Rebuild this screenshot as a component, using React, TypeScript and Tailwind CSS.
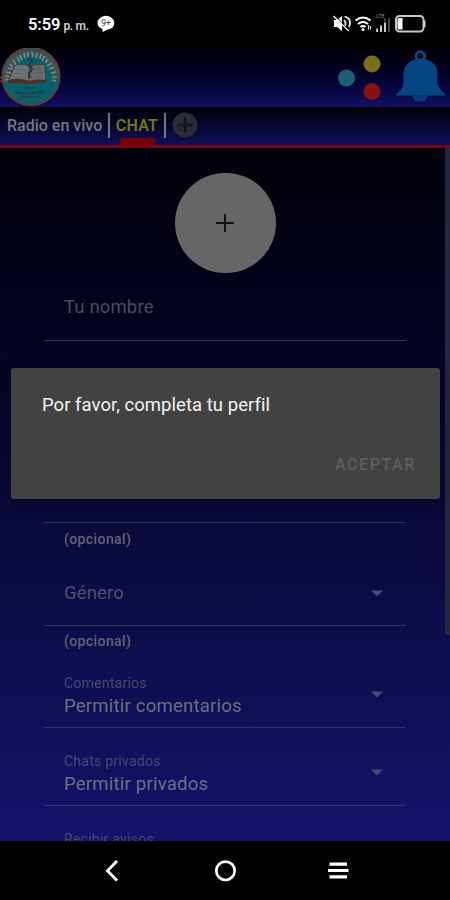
import React from "react";

function StatusBar() {
  return (
    <div className="flex h-12 shrink-0 items-center bg-black pl-[28px] pr-[24px] text-white">
      <div className="flex items-baseline gap-[3px] pt-[2px]">
        <span className="text-[16.500px] font-semibold leading-[20px] tracking-[-0.100px]">5:59</span>
        <span className="w-[25px] whitespace-nowrap text-[12px] font-semibold leading-[20px] tracking-[-0.3px] text-[#d0d0d0]">p. m.</span>
      </div>
      <svg className="ml-[9px] h-[18px] w-[18px]" viewBox="0 0 18 18">
        <path d="M9 .800 C14 1.300 17.300 4.300 17.300 8 C17.300 11.500 14.500 14 11 14.500 L5.500 17 L5.500 14 C2.500 13 .5 11 .5 8 C.5 4.300 4 1.300 9 .800Z" fill="#fff" />
        <text x="9" y="11" textAnchor="middle" fontSize="8.500" fontFamily="Roboto, sans-serif" fill="#444">9+</text>
      </svg>
      <svg className="ml-auto h-[20px] w-[94px]" viewBox="332 14 94 20" fill="none">
        <path d="M334 20h3l5-4v15l-5-4h-3z" fill="#fff" />
        <path d="M344 20q3 3.500 0 7M344.500 16.500q8 2 4.500 10.500M333.500 16l15.500 15" stroke="#eee" strokeWidth="1.700" />
        <path d="M335 15.500l14.500 15" stroke="#000" strokeWidth=".8" />
        <path d="M355.500 20.500q7.500-6 15 0M358 24q5-4 10 0M360.500 27q2.500-2 5 0" stroke="#fff" strokeWidth="2" />
        <circle cx="363" cy="29.500" r="1.500" fill="#fff" />
        <path d="M368.500 25v4.500M370.500 26v3.500" stroke="#ddd" strokeWidth="1.200" />
        <text x="376" y="17.800" fontSize="5.500" fontFamily="Roboto, sans-serif" fill="#888">LTE</text>
        <path d="M377.200 28.500v3.500M381 25.500v6.500M385 22.500v9.500" stroke="#eee" strokeWidth="1.700" />
        <path d="M385 18.500v3M389 18.500v13.500" stroke="#555" strokeWidth="1.700" />
        <rect x="396" y="16" width="27.500" height="15.500" rx="3.500" stroke="#c9c9c9" strokeWidth="2" />
        <path d="M399 18h3.500v11.500h-3.500q-1.500 0-1.500-1.500v-8.500q0-1.500 1.500-1.500z" fill="#fff" />
        <path d="M424.500 20.500v6.500" stroke="#ccc" strokeWidth="2" />
      </svg>
    </div>
  );
}

function Logo() {
  return (
    <svg className="h-[60px] w-[61px]" viewBox="0 0 61 60">
      <circle cx="31" cy="28.500" r="28.800" fill="#07606a" stroke="#803620" strokeWidth="1.500" />
      <path d="M0 34l2.500-2M0 30l2.500-1" stroke="#803620" strokeWidth="1.500" />
      <path d="M6.500 34A25 25 0 1 1 56 31" fill="none" stroke="#3c5356" strokeWidth="5.500" />
      <path d="M5 32l5-1M5 28l5 1M6 24l5 1M8 20l5 1M10 16l4 4M13 12l3 5M17 9l3 5M20 7l2 5M24 5l1 5M28 4l0 5M32 4l1 5M37 5l-1 5M41 6l-1 5M45 8l-3 5M48 11l-3 4M52 15l-5 3M54 19l-5 2M56 24l-5 1M57 29l-5 0M56 33l-4-1" stroke="#858381" strokeWidth="1.700" />
      <path d="M8 33l6-15q9-3 16 0 8-3 15-1l1.500 17-16.500 2-22-1z" fill="#4b3028" />
      <path d="M9.500 31.500l6-14q8-2 13.500 1l-1 14q-8-3-18.500-1z" fill="#717475" />
      <path d="M30 18.500q7-2.500 14.500-1.500l.8 15q-9-1.500-16.800 1z" fill="#686a6a" />
      <path d="M15 21l11 1M14 25l12 1M12 29l14 1M32 21l10-1M32 25l11-.5M32 29l11-.5" stroke="#576062" strokeWidth=".7" />
      <path d="M28 10l4 3-3 4 3 4-3 5 1 4" fill="none" stroke="#273a3d" strokeWidth="2" />
      <path d="M25 40h9M15 44q16 3 29-1M20 48q10 2 20-.5" fill="none" stroke="#263e43" strokeWidth="2" strokeDasharray="2 .8 3 1" />
    </svg>
  );
}

function Header() {
  return (
    <div className="flex h-[59px] shrink-0 items-start bg-linear-to-b from-[#000005] to-[#100f61] pb-px">
      <Logo />
      <svg className="ml-auto h-[57px] w-[114px]" viewBox="336 48 114 57">
        <circle cx="372" cy="64" r="8.500" fill="#77701b" />
        <circle cx="346.500" cy="78" r="8.500" fill="#1d6076" />
        <circle cx="372" cy="91.500" r="8.500" fill="#871216" />
        <circle cx="420.300" cy="56" r="4.300" fill="none" stroke="#044985" strokeWidth="2.800" />
        <path d="M403.500 83V73C404 64 412 58.500 420.500 58.500S437.500 64 437.500 73v10q1 6 7.500 11v1.500h-49V94q7-4 7.500-11z" fill="#034681" />
        <path d="M412 95.500h16q-1 6-8 6t-8-6z" fill="#063b7a" />
      </svg>
    </div>
  );
}

function Tabs() {
  return (
    <div className="flex h-[41px] shrink-0 items-start border-b-[3px] border-[#730914] bg-linear-to-b from-[#020207] to-[#100f5c] pl-[7px] text-[16px] leading-[37px] text-[#77777d]">
      <span className="w-[101px] whitespace-nowrap font-medium tracking-[0px]">Radio en vivo</span>
      <span className="mt-[6px] h-[25px] w-[2px] bg-[#77777d]" />
      <div className="ml-[6px] flex h-[38px] w-[42px] flex-col items-center justify-between">
        <span className="h-[31px] font-semibold tracking-[0.200px] text-[#77771c]">CHAT</span>
        <span className="h-[7px] w-[35px] bg-[#760007]" />
      </div>
      <span className="ml-[6px] mt-[6px] h-[25px] w-[2px] bg-[#77777d]" />
      <svg className="ml-[6px] mt-[5px] h-[26px] w-[26px]" viewBox="0 0 26 26">
        <circle cx="13" cy="13" r="12.500" fill="#2b2b33" />
        <path d="M13 5.500v15M5.500 13h15" stroke="#121225" strokeWidth="2.500" />
      </svg>
    </div>
  );
}

function Caret() {
  return (
    <svg className="h-[7px] w-[12px]" viewBox="0 0 12 7">
      <path d="M0 .5h12L6 6.500z" fill="#4a4a72" />
    </svg>
  );
}

function Select({ label, value }: { label: string; value: string }) {
  return (
    <div className="flex h-[78px] shrink-0 items-start border-b border-[#323268] pl-[20px] pr-[23px] pt-[25px]">
      <div className="flex flex-col">
        <span className="text-[14px] leading-[16px] tracking-[0.250px] text-[#474772]">{label}</span>
        <span className="mt-[3px] text-[18.500px] leading-[24px] tracking-[0.230px] text-[#6e6e84]">{value}</span>
      </div>
      <div className="ml-auto mt-[16px] flex"><Caret /></div>
    </div>
  );
}

function ProfileForm() {
  return (
    <div className="flex h-[693px] shrink-0 justify-between overflow-hidden bg-linear-to-b from-[#01010a] via-[#0a0a3b] via-54% to-[#14126a]">
      <div className="ml-[44px] flex w-[362px] flex-col">
        <div className="mt-[25px] flex h-[100px] w-[101px] shrink-0 items-center justify-center self-center rounded-full bg-[#666]">
          <svg className="h-[18px] w-[18px]" viewBox="0 0 18 18">
            <path d="M9 0v18M0 9h18" stroke="#111" strokeWidth="2" />
          </svg>
        </div>
        <div className="mt-[10px] flex h-[58px] shrink-0 items-center border-b border-[#35354e] pb-[7px] pl-[20px] text-[18.500px] tracking-[0.150px] text-[#4b4b5e]">Tu nombre</div>
        <div className="h-[182px] shrink-0 border-b border-[#2c2c54]" />
        <span className="mt-px h-[32px] shrink-0 pl-[20px] text-[14px] font-medium leading-[31px] tracking-[0.400px] text-[#626274]">(opcional)</span>
        <div className="flex h-[70px] shrink-0 items-center border-b border-[#302f60] pl-[20px] pr-[23px] pt-[5px] text-[18.500px] tracking-[0.150px] text-[#50506c]">
          <span className="pt-[1px]">Género</span>
          <div className="ml-auto flex"><Caret /></div>
        </div>
        <span className="h-[24px] shrink-0 pl-[20px] text-[14px] font-medium leading-[31px] tracking-[0.400px] text-[#626276]">(opcional)</span>
        <Select label="Comentarios" value="Permitir comentarios" />
        <Select label="Chats privados" value="Permitir privados" />
        <span className="shrink-0 pl-[20px] pt-[25px] text-[14px] leading-[16px] tracking-[0.250px] text-[#474772]">Recibir avisos</span>
      </div>
      <div className="h-[487px] w-[5px] bg-[#26263e]" />
    </div>
  );
}

function Navigation() {
  return (
    <div className="grid h-[59px] shrink-0 grid-cols-3 items-center justify-items-center bg-black px-[56px]">
      <svg className="h-[24px] w-[24px]" viewBox="0 0 24 24" fill="none">
        <path d="M17 2L7.500 11.800 17 21.500" stroke="#fff" strokeWidth="2.900" />
      </svg>
      <svg className="h-[24px] w-[24px]" viewBox="0 0 24 24" fill="none">
        <circle cx="12.500" cy="11.800" r="9.200" stroke="#fff" strokeWidth="2.700" />
      </svg>
      <svg className="h-[24px] w-[24px]" viewBox="0 0 24 24" fill="none">
        <path d="M3.500 5.200h17.500M2 11.500h20.500M3.500 17.800h17.500" stroke="#fff" strokeWidth="3.200" />
      </svg>
    </div>
  );
}

export default function App() {
  return (
    <div className="relative flex h-[900px] w-[450px] flex-col overflow-hidden bg-black font-[Roboto,sans-serif]">
      <StatusBar />
      <Header />
      <Tabs />
      <ProfileForm />
      <Navigation />
      <div role="dialog" className="absolute left-[11px] top-[368px] flex h-[131px] w-[429px] flex-col rounded-[3px] bg-[#424242] pl-[31px] pr-[24px] pt-[25px] shadow-[0_4px_14px_2px_rgba(0,0,0,0.3)]">
        <span className="text-[18.500px] leading-[24px] tracking-[0.040px] text-[#f4f4f4]">Por favor, completa tu perfil</span>
        <button className="mt-[37px] self-end text-[16px] font-medium leading-[21px] tracking-[1.600px] text-[#5e5e5e]">ACEPTAR</button>
      </div>
    </div>
  );
}
